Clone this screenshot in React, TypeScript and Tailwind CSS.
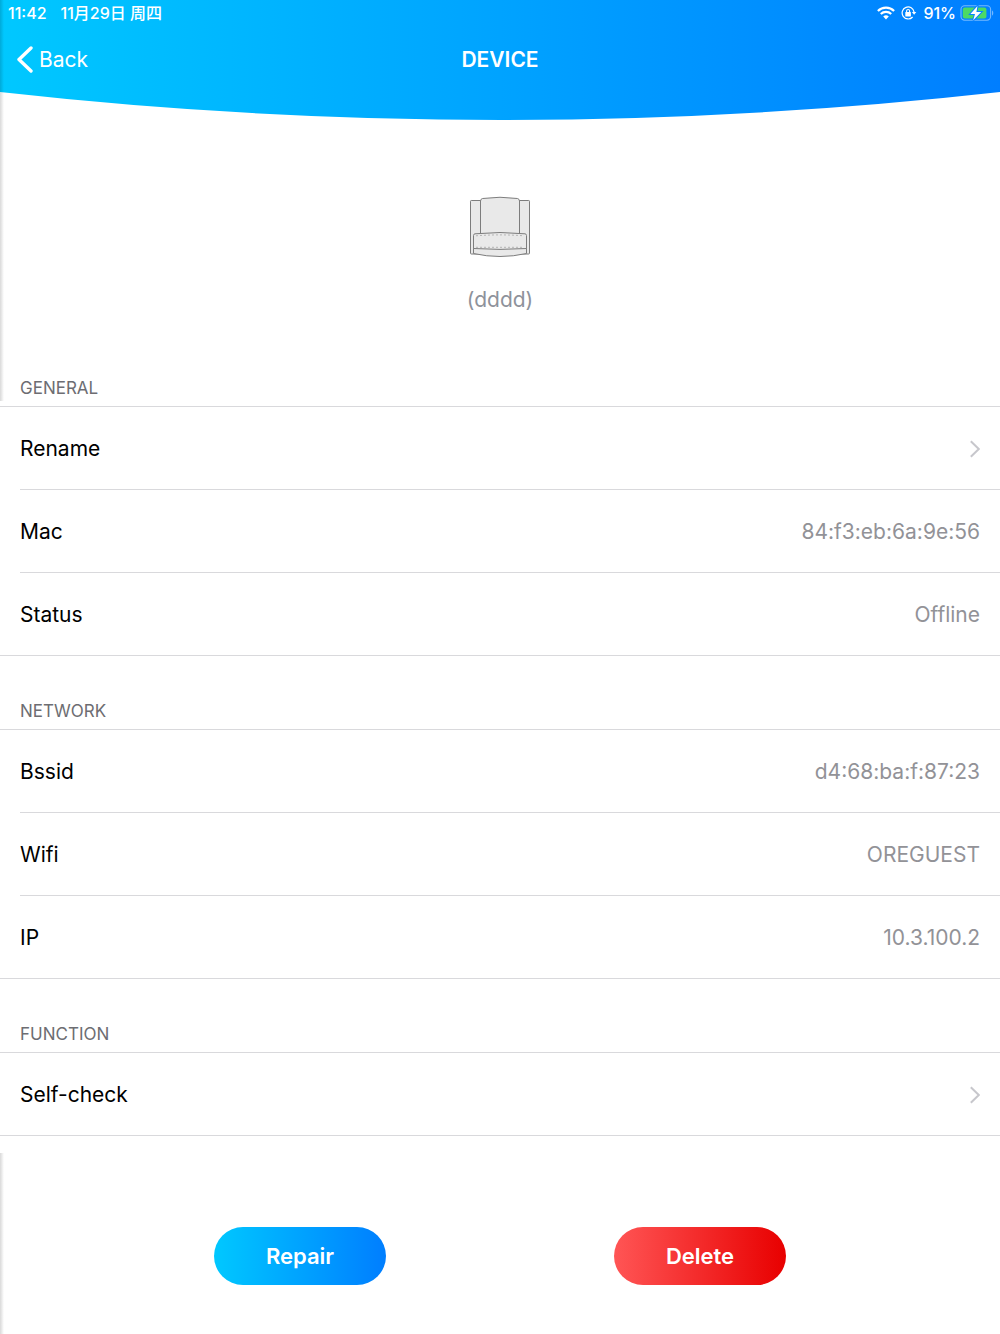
type Row = { label: string; value?: string };

const sections: { title: string; rows: Row[] }[] = [
  {
    title: "GENERAL",
    rows: [
      { label: "Rename" },
      { label: "Mac", value: "84:f3:eb:6a:9e:56" },
      { label: "Status", value: "Offline" },
    ],
  },
  {
    title: "NETWORK",
    rows: [
      { label: "Bssid", value: "d4:68:ba:f:87:23" },
      { label: "Wifi", value: "OREGUEST" },
      { label: "IP", value: "10.3.100.2" },
    ],
  },
  { title: "FUNCTION", rows: [{ label: "Self-check" }] },
];

function WifiIcon() {
  return (
    <svg width="18" height="14" viewBox="0 0 18 14" fill="none" stroke="#fff" strokeWidth="2.2">
      <path d="M0.9 5a11.5 11.5 0 0 1 16.2 0" />
      <path d="M3.8 8a7.4 7.4 0 0 1 10.4 0" />
      <path d="M9 13.4 6.2 10.6a4 4 0 0 1 5.6 0z" fill="#fff" stroke="none" />
    </svg>
  );
}

function RotationLockIcon() {
  return (
    <svg width="16" height="14" viewBox="0 0 16 14" fill="none" stroke="#fff">
      <path d="M13.1 6.2A6 6 0 1 0 11.6 11" strokeWidth="1.2" />
      <path d="M10.9 6h4.4l-2.2 2.8z" fill="#fff" stroke="none" />
      <rect x="4.3" y="6" width="5.6" height="4.400" rx="0.5" fill="#fff" stroke="none" />
      <path d="M5.6 6.4V5a1.500 1.500 0 0 1 3 0v1.4" strokeWidth="1.1" />
    </svg>
  );
}

function BatteryIcon() {
  return (
    <svg width="34" height="16" viewBox="0 0 34 16">
      <rect x="1" y="0.800" width="29.600" height="14.400" rx="3.600" fill="none" stroke="#fff" strokeOpacity="0.45" strokeWidth="1.1" />
      <path d="M32 5.500c1.700.6 1.700 4.400 0 5z" fill="#fff" fillOpacity="0.45" />
      <rect x="2.800" y="2.600" width="23.600" height="10.800" rx="2" fill="#4cd964" />
      <path d="M17.500 1 10.400 9h4.600l-1.800 6.200 8-8.200h-4.800z" fill="#fff" stroke="#0a84ff" strokeWidth="2" paintOrder="stroke" />
    </svg>
  );
}

function Armchair() {
  return (
    <svg width="62" height="62" viewBox="0 0 62 62" fill="#e9e9e9" stroke="#7d7d7d" strokeWidth="1">
      <rect x="1.500" y="4.500" width="11" height="53.500" rx="0.800" />
      <rect x="49.500" y="4.500" width="11" height="53.500" rx="0.800" />
      <path d="M11.500 38V5q0-2 2-2.500 17.500-2.500 35 0 2 .5 2 2.500v33z" />
      <path d="M4.500 51h53v6.500q-26.500 6-53 0z" />
      <path d="M4.500 39.500q0-1.500 1.500-1.700 25-2.600 50 0 1.500.2 1.500 1.700V52.500q-26.500 1.800-53 0z" />
      <path d="M7 39.800q24-1.800 48 0M7 51.300h48" stroke="#b5b5b5" strokeDasharray="2 2" fill="none" />
    </svg>
  );
}

function Chevron() {
  return (
    <svg width="11" height="18" viewBox="0 0 11 18" fill="none" stroke="#c7c7cc" strokeWidth="2">
      <path d="M1.800 1.200 9.800 9l-8 7.800" />
    </svg>
  );
}

/* soft shadow along the left edge of the screen */
function EdgeShadow({ className }: { className: string }) {
  return (
    <div className={`pointer-events-none absolute left-0 w-[4px] bg-linear-to-r from-black/15 to-transparent ${className}`} />
  );
}

function Header() {
  return (
    <header className="bg-linear-to-r/srgb from-[#00c8ff] to-[#007eff] text-white">
      <div className="flex h-[26px] items-center justify-between pr-[6px] pl-2 text-[16px] leading-5 font-medium">
        <div className="flex gap-[14px]">
          <span>11:42</span>
          <span>11月29日 周四</span>
        </div>
        <div className="flex items-center gap-[6px]">
          <WifiIcon />
          <RotationLockIcon />
          <div className="flex items-center gap-1">
            <span>91%</span>
            <BatteryIcon />
          </div>
        </div>
      </div>
      <div className="grid h-[66px] grid-cols-3 items-center px-4 pt-[2px]">
        <button className="flex items-center gap-[5px] justify-self-start text-[21px] leading-7">
          <svg width="18" height="28" viewBox="0 0 18 28" fill="none" stroke="#fff" strokeWidth="3.400" strokeLinecap="round" strokeLinejoin="round">
            <path d="M15 2 3 13.500l12 11.500" />
          </svg>
          Back
        </button>
        <h1 className="text-center text-[21px] leading-7 font-semibold">DEVICE</h1>
      </div>
      {/* white area curving up towards both edges */}
      <svg className="block h-7 w-full" viewBox="0 0 1000 28" preserveAspectRatio="none">
        <path d="M0 0Q500 56 1000 0V29H0z" fill="#fff" />
      </svg>
    </header>
  );
}

function Section({ title, rows }: { title: string; rows: Row[] }) {
  return (
    <section>
      <h2 className="flex h-[73px] items-end pb-[6px] pl-5 text-[17px] leading-6 text-[#6d6d72]">{title}</h2>
      <ul className="border-y border-[#d9d9dc]">
        {rows.map((r) => (
          <li key={r.label} className="group pl-5">
            <div className="flex h-[83px] items-center justify-between border-b border-[#d9d9dc] pt-[2px] pr-5 text-[21px] leading-7 group-last:h-[82px] group-last:border-b-0">
              {r.value ? (
                <>
                  <span>{r.label}</span>
                  <span className="text-[#929297]">{r.value}</span>
                </>
              ) : (
                <button className="flex flex-1 items-center justify-between text-left">
                  {r.label}
                  <Chevron />
                </button>
              )}
            </div>
          </li>
        ))}
      </ul>
    </section>
  );
}

export default function App() {
  return (
    <div className="min-h-screen bg-white font-['Inter','Noto_Sans_CJK_SC',sans-serif]">
      <div className="relative">
        <Header />
        <div className="flex h-[213px] flex-col items-center pt-[76px]">
          <Armchair />
          <p className="mt-7 text-[21px] leading-7 text-[#8e929b]">(dddd)</p>
        </div>
        {/* the shadow runs on next to the first section title */}
        <EdgeShadow className="top-0 -bottom-[68px]" />
      </div>

      <main>
        {sections.map((s) => (
          <Section key={s.title} {...s} />
        ))}
      </main>

      <div className="relative mt-[17px]">
        <EdgeShadow className="inset-y-0" />
        <div className="grid grid-cols-2 justify-items-center px-[10%] pt-[74px] pb-[49px] text-[22px] leading-7 font-semibold text-white">
          <button className="h-[58px] w-[172px] rounded-full bg-linear-to-r/srgb from-[#00c8ff] to-[#007eff]">Repair</button>
          <button className="h-[58px] w-[172px] rounded-full bg-linear-to-r/srgb from-[#ff5555] to-[#e80000]">Delete</button>
        </div>
      </div>
    </div>
  );
}
